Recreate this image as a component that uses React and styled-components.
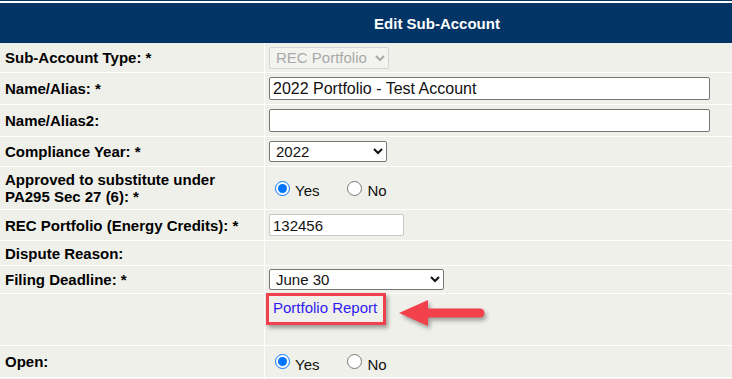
import React from 'react'
import styled, { createGlobalStyle } from 'styled-components'

const navy = '#033466'
const cellBg = '#f0f0eb'

const GlobalStyle = createGlobalStyle`
  html, body {
    margin: 0;
    background: #ffffff;
    overflow: hidden;
  }
  body {
    font-family: "Liberation Sans", Arial, sans-serif;
    color: #000;
  }
`

// the form table is wider than the window, it gets cut at the right
const Viewport = styled.div`
  width: 732px;
  height: 379px;
  overflow: hidden;
`

const TopRule = styled.div`
  height: 1px;
  width: 874px;
  background: ${navy};
  margin-bottom: 2px;
`

const Sheet = styled.div`
  width: 874px;
  background: #ffffff;
`

const Header = styled.div`
  height: 40px;
  background: ${navy};
  color: #ffffff;
  font-weight: bold;
  font-size: 15px;
  display: flex;
  align-items: center;
  justify-content: center;
`

const Rows = styled.div`
  display: flex;
  flex-direction: column;
  gap: 1px;
`

const Row = styled.div`
  display: grid;
  grid-template-columns: 264px 1fr;
  column-gap: 1px;
  height: ${props => props.h}px;
`

const Label = styled.div`
  background: ${cellBg};
  font-weight: bold;
  font-size: 15px;
  line-height: 17px;
  padding-left: 5px;
  display: flex;
  align-items: center;
`

const Field = styled.div`
  position: relative;
  background: ${cellBg};
  padding-left: 4px;
  display: flex;
  align-items: ${props => props.top ? 'flex-start' : 'center'};
`

const TextInput = styled.input`
  box-sizing: border-box;
  width: ${props => props.w}px;
  height: ${props => props.hgt || 23}px;
  margin: 0;
  padding: 0 3px;
  font-family: "Liberation Sans", Arial, sans-serif;
  font-size: ${props => props.fs || 15}px;
  color: #111;
  background: #ffffff;
  border: 1px solid ${props => props.light ? '#c9c9c9' : '#767676'};
  border-radius: 2px;
  outline: none;
`

const Select = styled.select`
  box-sizing: border-box;
  width: ${props => props.w}px;
  height: ${props => props.hgt || 21}px;
  margin: 0;
  padding: 0 2px;
  font-family: "Liberation Sans", Arial, sans-serif;
  font-size: 15px;
  color: #111;
  background-color: #ffffff;
  border: 1px solid #767676;
  border-radius: 2px;

  &:disabled {
    color: #a9a9a9;
    background-color: #f3f3ef;
    border-color: #d4d4d0;
    opacity: 1;
  }
`

const RadioGroup = styled.div`
  display: flex;
  align-items: center;
  padding-left: 6px;
  gap: 28px;
`

const RadioLabel = styled.label`
  display: flex;
  align-items: center;
  gap: 5px;
  font-size: 15px;
  line-height: 15px;
  color: #111;

  span {
    padding-top: 5px;
  }
`

const Radio = styled.input`
  width: 15px;
  height: 15px;
  margin: 0;
  accent-color: #0075ff;
`

const ReportLink = styled.a`
  display: block;
  margin: -1px 0 0 -3px;
  padding: 3px 6px 6px 4px;
  border: 3px solid #ee414d;
  box-shadow: 2px 3px 4px rgba(0, 0, 0, 0.35);
  color: #2d1cf0;
  font-size: 15px;
  line-height: 17px;
  text-decoration: none;
  position: relative;
  z-index: 1;
  background: ${cellBg};
`

const Arrow = styled.svg`
  position: absolute;
  left: 132px;
  top: 4px;
  z-index: 2;
  filter: drop-shadow(2px 3px 2px rgba(0, 0, 0, 0.35));
`

const YesNo = ({ name }) => (
  <RadioGroup>
    <RadioLabel>
      <Radio type='radio' name={name} defaultChecked />
      <span>Yes</span>
    </RadioLabel>
    <RadioLabel>
      <Radio type='radio' name={name} />
      <span>No</span>
    </RadioLabel>
  </RadioGroup>
)

const App = () => {
  return (
    <Viewport>
      <GlobalStyle />
      <TopRule />
      <Sheet>
        <Header>Edit Sub-Account</Header>
        <Rows>
          <Row h={29}>
            <Label>Sub-Account Type: *</Label>
            <Field>
              <Select w={120} hgt={22} disabled defaultValue='rec'>
                <option value='rec'>REC Portfolio</option>
              </Select>
            </Field>
          </Row>
          <Row h={31}>
            <Label>Name/Alias: *</Label>
            <Field>
              <TextInput w={441} fs={16} defaultValue='2022 Portfolio - Test Account' />
            </Field>
          </Row>
          <Row h={31}>
            <Label>Name/Alias2:</Label>
            <Field>
              <TextInput w={441} fs={16} defaultValue='' />
            </Field>
          </Row>
          <Row h={29}>
            <Label>Compliance Year: *</Label>
            <Field>
              <Select w={118} defaultValue='2022'>
                <option value='2021'>2021</option>
                <option value='2022'>2022</option>
                <option value='2023'>2023</option>
              </Select>
            </Field>
          </Row>
          <Row h={42}>
            <Label>Approved to substitute under<br />PA295 Sec 27 (6): *</Label>
            <Field>
              <YesNo name='approved' />
            </Field>
          </Row>
          <Row h={30}>
            <Label>REC Portfolio (Energy Credits): *</Label>
            <Field>
              <TextInput w={135} hgt={22} light defaultValue='132456' />
            </Field>
          </Row>
          <Row h={24}>
            <Label>Dispute Reason:</Label>
            <Field />
          </Row>
          <Row h={27}>
            <Label>Filing Deadline: *</Label>
            <Field>
              <Select w={175} defaultValue='june'>
                <option value='march'>March 31</option>
                <option value='june'>June 30</option>
              </Select>
            </Field>
          </Row>
          <Row h={24}>
            <Label />
            <Field top>
              <ReportLink href='#'>Portfolio Report</ReportLink>
              <Arrow width='96' height='34' viewBox='0 0 96 34'>
                <path d='M2 15 L31 2 L31 28 Z' fill='#f2414a' />
                <line x1='28' y1='15' x2='83' y2='15' stroke='#f2414a' strokeWidth='9' strokeLinecap='round' />
              </Arrow>
            </Field>
          </Row>
          <Row h={26}>
            <Label />
            <Field />
          </Row>
          <Row h={31}>
            <Label>Open:</Label>
            <Field>
              <YesNo name='open' />
            </Field>
          </Row>
          <Row h={24}>
            <Label />
            <Field />
          </Row>
        </Rows>
      </Sheet>
    </Viewport>
  )
}

export default App
